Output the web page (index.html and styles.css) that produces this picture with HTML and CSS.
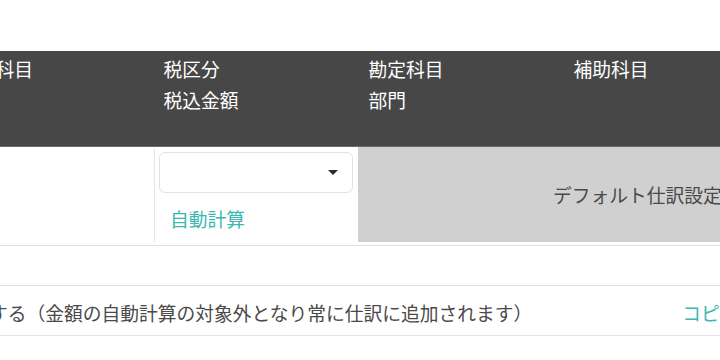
FILE: index.html
```html
<!DOCTYPE html>
<html>
<head>
    <title>仕訳設定</title>
    <link rel="stylesheet" href="styles.css">
</head>
<body>
    <div class="sheet">
        <div class="head-row">
            <div class="head-cell">勘定科目</div>
            <div class="head-cell">税区分<br>税込金額</div>
            <div class="head-cell">勘定科目<br>部門</div>
            <div class="head-cell">補助科目</div>
        </div>
        <div class="body-row">
            <div class="cell-blank"></div>
            <div class="cell-tax">
                <div class="select-box">
                    <span class="caret"></span>
                </div>
                <a class="link auto-calc">自動計算</a>
            </div>
            <div class="cell-default">デフォルト仕訳設定</div>
        </div>
        <div class="empty-row"></div>
        <div class="note-row">
            <span class="note">固定する（金額の自動計算の対象外となり常に仕訳に追加されます）</span>
            <a class="link copy">コピー</a>
        </div>
    </div>
</body>
</html>
```

FILE: styles.css
```css
body {
    margin: 0;
    padding: 0;
    background-color: #fff;
    font-family: "Noto Sans CJK JP", "Noto Sans", sans-serif;
    font-size: 18.75px;
    color: #4a4a4a;
    overflow: hidden;
}
.sheet {
    margin-top: 51px;
    margin-left: -52px;
    width: 1100px;
}
.head-row {
    display: flex;
    height: 95px;
    background-color: #474747;
    border-bottom: 1px solid #6a6a6a;
    color: #fff;
}
.head-cell {
    width: 205px;
    box-sizing: border-box;
    padding: 2px 10px 0 10px;
    line-height: 31px;
}
.head-cell:first-child {
    width: 205.5px;
}
.body-row {
    display: flex;
    padding-bottom: 3px;
    border-bottom: 1px solid #dde1e7;
}
.cell-blank {
    width: 205.5px;
    margin-top: 2px;
    height: 93px;
    border-right: 1px solid #e3e5e8;
}
.cell-tax {
    width: 203.5px;
    box-sizing: border-box;
    padding: 5px 5px 0 4px;
}
.select-box {
    height: 41px;
    box-sizing: border-box;
    border: 1px solid #dfe2e8;
    border-radius: 6px;
    background-color: #fff;
    display: flex;
    align-items: center;
    justify-content: flex-end;
    padding-right: 14px;
}
.caret {
    width: 0;
    height: 0;
    border-left: 5px solid transparent;
    border-right: 5px solid transparent;
    border-top: 5px solid #2b2b2b;
}
.link {
    color: #3bb8b2;
    cursor: pointer;
}
.auto-calc {
    display: block;
    margin-top: 12px;
    padding-left: 11.5px;
    line-height: 28px;
}
.cell-default {
    flex: 1;
    height: 95px;
    background-color: #d0d0d0;
    display: flex;
    align-items: center;
    padding-left: 195px;
    color: #4a4a4a;
}
.empty-row {
    height: 39px;
    border-bottom: 1px solid #dde1e7;
}
.note-row {
    display: flex;
    align-items: center;
    height: 50px;
    box-sizing: border-box;
    padding-top: 3px;
    padding-left: 3.5px;
    border-bottom: 1px solid #e3e5e8;
}
.copy {
    margin-left: 150px;
}
```
